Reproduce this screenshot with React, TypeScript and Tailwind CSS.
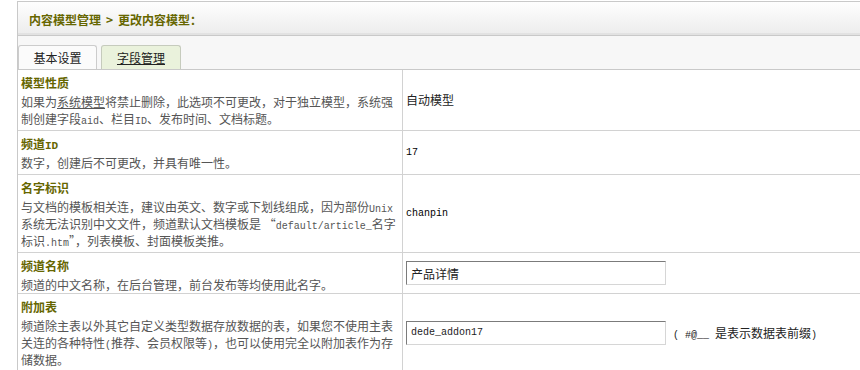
import React from 'react';

const Mono: React.FC<{ children: React.ReactNode }> = ({ children }) => (
  <span className="font-['Liberation_Mono',monospace] text-[10px] leading-[0]">{children}</span>
);

const Field: React.FC<{ value: string; mono?: boolean }> = ({ value, mono }) => (
  <input
    readOnly
    defaultValue={value}
    className={`w-[260px] h-[24px] px-[4px] border border-t-[#7b7b7b] border-l-[#7b7b7b] border-r-[#d6d6d6] border-b-[#d6d6d6] bg-white text-[#222] outline-none ${
      mono ? "font-['Liberation_Mono',monospace] text-[10px]" : 'text-[12px]'
    }`}
  />
);

type Row = {
  title: React.ReactNode;
  lines: React.ReactNode[];
  value: React.ReactNode;
  pad?: string;
};

const ROWS: Row[] = [
  {
    title: '模型性质',
    lines: [
      <>如果为<span className="underline">系统模型</span>将禁止删除，此选项不可更改，对于独立模型，系统强</>,
      <>制创建字段<Mono>aid</Mono>、栏目<Mono>ID</Mono>、发布时间、文档标题。</>,
    ],
    value: <span className="text-[12px] text-[#222]">自动模型</span>,
  },
  {
    title: <>频道<span className="font-['Liberation_Mono',monospace] text-[11px] leading-[0]">ID</span></>,
    lines: ['数字，创建后不可更改，并具有唯一性。'],
    value: <Mono>17</Mono>,
  },
  {
    title: '名字标识',
    lines: [
      <>与文档的模板相关连，建议由英文、数字或下划线组成，因为部份<Mono>Unix</Mono></>,
      <>系统无法识别中文文件，频道默认文档模板是 “<Mono>default/article_</Mono>名字</>,
      <>标识<Mono>.htm</Mono>”，列表模板、封面模板类推。</>,
    ],
    value: <Mono>chanpin</Mono>,
  },
  {
    title: '频道名称',
    lines: ['频道的中文名称，在后台管理，前台发布等均使用此名字。'],
    value: <Field value="产品详情" />,
    pad: 'pb-0',
  },
  {
    title: '附加表',
    lines: [
      '频道除主表以外其它自定义类型数据存放数据的表，如果您不使用主表',
      <>关连的各种特性<Mono>(</Mono>推荐、会员权限等<Mono>)</Mono>，也可以使用完全以附加表作为存</>,
      '储数据。',
    ],
    value: (
      <div className="flex items-center gap-[7px]">
        <Field value="dede_addon17" mono />
        <span className="text-[12px] text-[#222] whitespace-nowrap">
          <Mono>(&nbsp;#@__&nbsp;</Mono>是表示数据表前缀<Mono>)</Mono>
        </span>
      </div>
    ),
  },
];

const App: React.FC = () => {
  return (
    <div className="w-[860px] h-[370px] overflow-hidden bg-white font-['Noto_Sans_CJK_SC',sans-serif] text-[12px]">
      <div className="ml-[17px] pt-[1px]">
        {/* Breadcrumb header */}
        <div className="h-[35px] flex items-center pl-[11px] pt-[2px] border-t border-l border-b border-[#c9c9c9] bg-linear-to-b from-[#fefefe] to-[#ececec] shadow-[inset_0_-2px_0_#e2e2e2]">
          <span className="font-bold text-[#666600]">
            内容模型管理<span className="px-[5px]">&gt;</span>更改内容模型：
          </span>
        </div>

        {/* Tabs */}
        <div className="h-[34px] flex items-end gap-[4px] border-l border-b border-[#c9c9c9] bg-[#f7f7f7]">
          <div className="w-[79px] h-[24px] flex items-center justify-center border border-b-0 border-[#cccccc] rounded-t-[3px] bg-[#fbfbfb] text-[#222]">
            基本设置
          </div>
          <div className="w-[80px] h-[24px] flex items-center justify-center border border-b-0 border-[#c6cbbd] rounded-t-[3px] bg-[#eaf2dc] text-[#222] underline">
            字段管理
          </div>
        </div>

        {/* Field rows */}
        <div className="border-l border-[#c9c9c9]">
          {ROWS.map((row, i) => (
            <div key={i} className="flex border-b border-[#d2d2d2]">
              <div className={`w-[385px] shrink-0 pl-[3px] pt-[3px] ${row.pad ?? 'pb-[3px]'} border-r border-[#d2d2d2] whitespace-nowrap`}>
                <div className="h-[20px] leading-[20px] font-bold text-[#666600]">{row.title}</div>
                {row.lines.map((line, j) => (
                  <div key={j} className="h-[17px] leading-[17px] text-[#555]">{line}</div>
                ))}
              </div>
              <div className="flex-1 flex items-center pl-[3px]">{row.value}</div>
            </div>
          ))}
        </div>
      </div>
    </div>
  );
};

export default App;
